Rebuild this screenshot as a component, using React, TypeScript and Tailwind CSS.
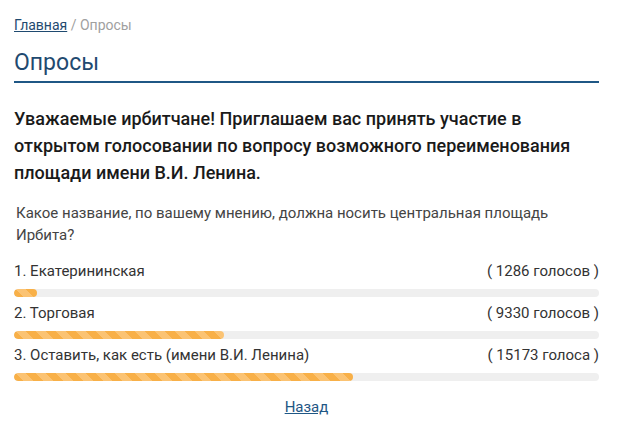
import React from 'react';

interface PollOption {
  label: string;
  votes: string;
  percent: number;
}

const options: PollOption[] = [
  { label: '1. Екатерининская', votes: '( 1286 голосов )', percent: 3.9 },
  { label: '2. Торговая', votes: '( 9330 голосов )', percent: 35.9 },
  { label: '3. Оставить, как есть (имени В.И. Ленина)', votes: '( 15173 голоса )', percent: 58 },
];

const App: React.FC = () => {
  return (
    <div className="min-h-[429px] bg-white font-['Roboto',sans-serif] text-[#333]">
      <div className="w-[585px] ml-[14px] pt-[15px]">
        {/* Breadcrumbs */}
        <div className="text-[14px] leading-[20px] text-[#a0a0a0]">
          <a href="#" className="text-[#1f4a70] underline">Главная</a> / Опросы
        </div>

        <h1 className="mt-[13px] pb-[3px] border-b-2 border-[#1f5785] text-[23px] leading-[30px] text-[#1f4a70]">
          Опросы
        </h1>

        <h2 className="mt-[22px] text-[18px] leading-[27px] font-medium text-[#1a1a1a]">
          Уважаемые ирбитчане! Приглашаем вас принять участие в открытом голосовании по вопросу возможного переименования площади имени В.И. Ленина.
        </h2>

        <p className="mt-[16px] pl-[2px] text-[15px] leading-[22px] text-[#444]">
          Какое название, по вашему мнению, должна носить центральная площадь Ирбита?
        </p>

        <div className="mt-[14px]">
          {options.map((option, index) => (
            <div key={index} className="mb-[5px]">
              <div className="flex justify-between text-[15px] leading-[22px] text-[#333]">
                <span>{option.label}</span>
                <span>{option.votes}</span>
              </div>
              <div className="mt-[7px] h-[8px] rounded-full bg-[#efefef] overflow-hidden">
                <div
                  className="h-full rounded-full bg-[repeating-linear-gradient(45deg,#f8b048_0px,#f8b048_7px,#fbc373_7px,#fbc373_14px)]"
                  style={{ width: `${option.percent}%` }}
                />
              </div>
            </div>
          ))}
        </div>

        <div className="mt-[15px] text-center text-[15px] leading-[22px]">
          <a href="#" className="text-[#1f5785] underline">Назад</a>
        </div>
      </div>
    </div>
  );
};

export default App;
